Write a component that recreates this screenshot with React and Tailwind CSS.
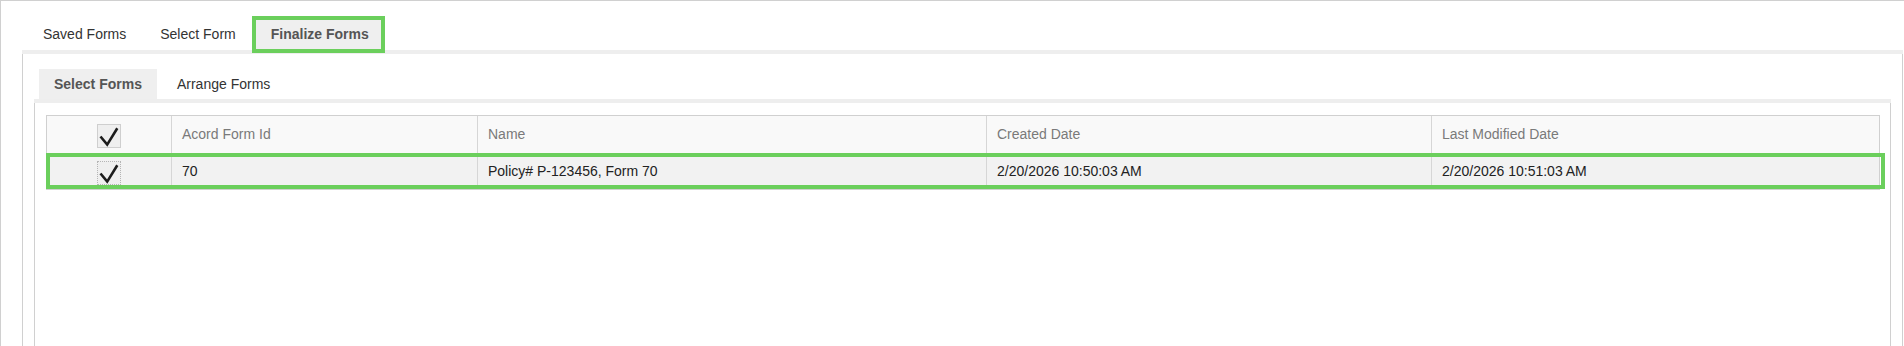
import React from "react";

const font = { fontFamily: '"Liberation Sans", Arial, Helvetica, sans-serif' };

function Check() {
  return (
    <svg width="24" height="24" viewBox="0 0 24 24" className="absolute left-[-1px] top-[-1px]">
      <path d="M3.5 12.5 L10.2 20.6 L20.3 4.3" fill="none" stroke="#1c1c1c" strokeWidth="2.6" strokeLinecap="butt" strokeLinejoin="miter" />
    </svg>
  );
}

function Box({ focus }) {
  return (
    <div
      className={
        "relative w-[24px] h-[24px] bg-[#efefef] border " +
        (focus ? "border-dotted border-[#b5b5b5]" : "border-[#cfcfcf]")
      }
    >
      <Check />
    </div>
  );
}

export default function App() {
  return (
    <div
      className="w-[1904px] h-[346px] overflow-hidden bg-white border-l border-t border-[#d0d0d0] pl-[21px] pr-[1px] flex flex-col text-[14px]"
      style={font}
    >
      {/* outer tabs */}
      <div className="h-[49px] flex items-end gap-[4px] ml-[6px] shrink-0">
        <div className="h-[31px] px-[15px] flex items-center text-[#333]">Saved Forms</div>
        <div className="h-[31px] px-[15px] flex items-center text-[#333]">Select Form</div>
        <div className="relative h-[31px] pl-[16px] pr-[13px] flex items-center bg-[#efefef] font-bold text-[#555]">
          Finalize Forms
          <span className="absolute -inset-[3px] border-[4px] border-[#6bcf5c]" />
        </div>
      </div>
      {/* outer panel */}
      <div className="flex-1 flex flex-col">
        <div className="h-[4px] bg-[#eeeeee] shrink-0" />
        <div className="flex-1 border-l border-r border-[#d0d0d0] px-[11px] flex flex-col">
          {/* inner tabs */}
          <div className="h-[45px] flex items-end gap-[5px] ml-[5px] shrink-0">
            <div className="h-[30px] px-[15px] flex items-center bg-[#efefef] font-bold text-[#555]">Select Forms</div>
            <div className="h-[30px] px-[15px] flex items-center text-[#333]">Arrange Forms</div>
          </div>
          {/* inner panel */}
          <div className="flex-1 flex flex-col">
            <div className="h-[4px] bg-[#eeeeee] shrink-0" />
            <div className="flex-1 border-l border-r border-[#d0d0d0] pl-[11px] pr-[10px] pt-[12px]">
              <div className="relative">
                <div className="border border-[#d0d0d0]">
                  <div className="grid grid-cols-[124px_306px_509px_445px_1fr] h-[37px] bg-[#f9f9f9] text-[#7a7a7a]">
                    <div className="flex items-center justify-center pt-[2px]">
                      <Box />
                    </div>
                    <div className="border-l border-[#d6d6d6] flex items-center pl-[10px]">Acord Form Id</div>
                    <div className="border-l border-[#d6d6d6] flex items-center pl-[10px]">Name</div>
                    <div className="border-l border-[#d6d6d6] flex items-center pl-[10px]">Created Date</div>
                    <div className="border-l border-[#d6d6d6] flex items-center pl-[10px]">Last Modified Date</div>
                  </div>
                  <div className="grid grid-cols-[124px_306px_509px_445px_1fr] h-[36px] bg-[#f2f2f2] text-[#222]">
                    <div className="flex items-center justify-center pt-[3px]">
                      <Box focus />
                    </div>
                    <div className="border-l border-[#d6d6d6] flex items-center pl-[10px]">70</div>
                    <div className="border-l border-[#d6d6d6] flex items-center pl-[10px]">Policy# P-123456, Form 70</div>
                    <div className="border-l border-[#d6d6d6] flex items-center pl-[10px]">2/20/2026 10:50:03 AM</div>
                    <div className="border-l border-[#d6d6d6] flex items-center pl-[10px]">2/20/2026 10:51:03 AM</div>
                  </div>
                </div>
                <span className="absolute left-0 top-[38px] w-[1839px] h-[36px] border-[4px] border-[#6bcf5c]" />
              </div>
            </div>
          </div>
        </div>
      </div>
    </div>
  );
}
